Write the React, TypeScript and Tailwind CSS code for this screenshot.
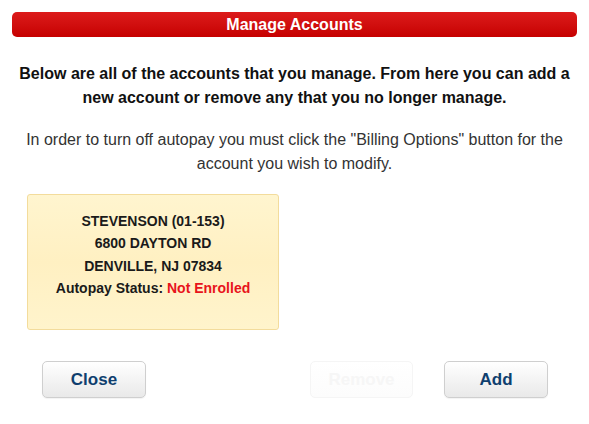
import React from 'react';

const font = { fontFamily: '"Liberation Sans", Arial, sans-serif' };

function Btn({ label, disabled }: { label: string; disabled?: boolean }) {
    return (
        <button
            disabled={disabled}
            className={
                disabled
                    ? 'w-[103px] h-[37px] rounded-[5px] border border-[#f5f5f5] bg-gradient-to-b from-[#ffffff] to-[#fcfcfc] text-[#f6f6f6] text-[17px] font-bold'
                    : 'w-[104px] h-[37px] rounded-[5px] border border-[#cfcfcf] bg-gradient-to-b from-[#ffffff] to-[#e9e9e9] text-[#0f3f6f] text-[17px] font-bold shadow-[0_1px_1px_rgba(0,0,0,0.05)]'
            }
        >
            {label}
        </button>
    );
}

export default function App() {
    return (
        <div className="w-[589px] h-[424px] bg-white px-3 pt-3" style={font}>
            <div className="h-[25px] rounded-[5px] bg-gradient-to-b from-[#dc1a1a] to-[#c60000] flex items-center justify-center">
                <span className="text-white text-[16px] font-bold leading-none">Manage Accounts</span>
            </div>

            <p className="mt-[25px] text-center text-[16px] font-bold leading-[24px] text-[#111]">
                Below are all of the accounts that you manage. From here you can add a
                <br />
                new account or remove any that you no longer manage.
            </p>

            <p className="mt-[18px] text-center text-[16px] leading-[24px] text-[#333]">
                In order to turn off autopay you must click the "Billing Options" button for the
                <br />
                account you wish to modify.
            </p>

            <div className="mt-[18px] ml-[15px] w-[252px] h-[136px] rounded-[3px] border border-[#f3dc9c] bg-gradient-to-b from-[#fff5cf] via-[#fff0c2] to-[#fff4cc] pt-[15px] text-center text-[14px] font-bold leading-[22.4px] text-[#1a1a1a]">
                <div>STEVENSON (01-153)</div>
                <div>6800 DAYTON RD</div>
                <div>DENVILLE, NJ 07834</div>
                <div>
                    Autopay Status: <span className="text-[#e8141b]">Not Enrolled</span>
                </div>
            </div>

            <div className="mt-[31px] pl-[30px] pr-[29px] flex items-center">
                <Btn label="Close" />
                <div className="ml-auto mr-[31px]">
                    <Btn label="Remove" disabled />
                </div>
                <Btn label="Add" />
            </div>
        </div>
    );
}
